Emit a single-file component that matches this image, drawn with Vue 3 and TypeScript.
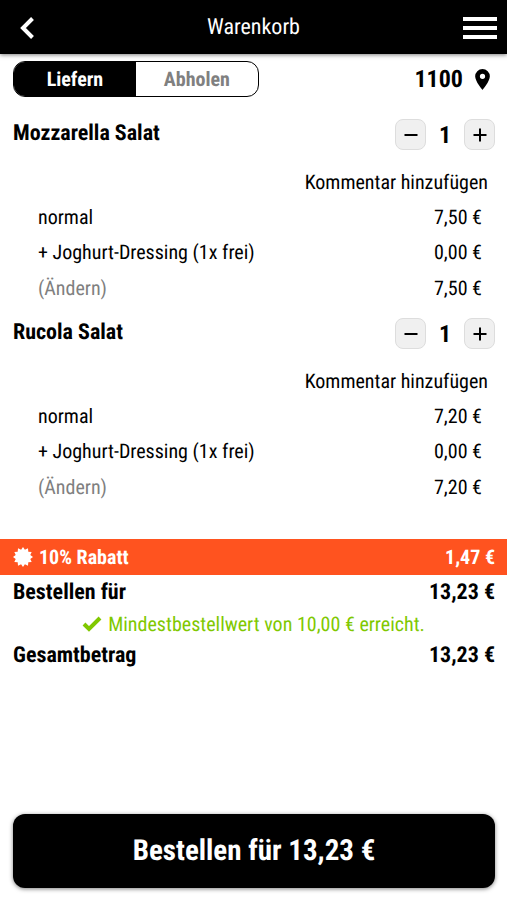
<script setup lang="ts">
import { computed, reactive, ref } from 'vue'

interface Item {
  name: string
  quantity: number
  price: number
}

const mode = ref<'deliver' | 'pickup'>('deliver')
const items = reactive<Item[]>([
  { name: 'Mozzarella Salat', quantity: 1, price: 7.5 },
  { name: 'Rucola Salat', quantity: 1, price: 7.2 },
])

const euro = (value: number): string => value.toFixed(2).replace('.', ',') + ' €'
const subtotal = computed(() => items.reduce((sum, item) => sum + item.price * item.quantity, 0))
const discount = computed(() => Math.round(subtotal.value * 10) / 100)
const total = computed(() => subtotal.value - discount.value)

function change(item: Item, step: number): void {
  item.quantity = Math.max(0, item.quantity + step)
}
</script>

<template>
  <div class="page">
    <header class="header">
      <button class="icon-button" type="button" aria-label="Zurück">
        <svg width="18" height="24" viewBox="0 0 18 24"><path d="M14.5 2.5 5 12l9.500 9.500" fill="none" stroke="#fff" stroke-width="4" /></svg>
      </button>
      <h1>Warenkorb</h1>
      <button class="icon-button" type="button" aria-label="Menü">
        <svg width="34" height="24" viewBox="0 0 34 24"><path d="M0 3h34M0 12h34M0 21h34" stroke="#fff" stroke-width="4" /></svg>
      </button>
    </header>

    <main class="content">
      <div class="options">
        <div class="toggle">
          <button type="button" :class="{ active: mode === 'deliver' }" @click="mode = 'deliver'">Liefern</button>
          <button type="button" :class="{ active: mode === 'pickup' }" @click="mode = 'pickup'">Abholen</button>
        </div>
        <button class="location" type="button">
          1100
          <svg width="15" height="21" viewBox="0 0 14 20"><path fill-rule="evenodd" d="M7 0a7 7 0 0 0-7 7c0 5 7 13 7 13s7-8 7-13a7 7 0 0 0-7-7Zm0 4.5a2.500 2.500 0 1 1 0 5 2.500 2.500 0 0 1 0-5Z" /></svg>
        </button>
      </div>

      <section v-for="item in items" :key="item.name" class="item">
        <div class="item-head">
          <h2>{{ item.name }}</h2>
          <div class="stepper">
            <button type="button" aria-label="Weniger" @click="change(item, -1)">
              <svg width="14" height="14" viewBox="0 0 14 14"><path d="M.5 7h13" stroke="#000" stroke-width="2" /></svg>
            </button>
            <span>{{ item.quantity }}</span>
            <button type="button" aria-label="Mehr" @click="change(item, 1)">
              <svg width="14" height="14" viewBox="0 0 14 14"><path d="M.5 7h13M7 .5v13" stroke="#000" stroke-width="2" /></svg>
            </button>
          </div>
        </div>
        <button class="comment" type="button">Kommentar hinzufügen</button>
        <div class="line"><span>normal</span><span>{{ euro(item.price) }}</span></div>
        <div class="line"><span>+ Joghurt-Dressing (1x frei)</span><span>{{ euro(0) }}</span></div>
        <div class="line"><button class="edit" type="button">(Ändern)</button><span>{{ euro(item.price * item.quantity) }}</span></div>
      </section>
    </main>

    <section class="summary">
      <div class="discount">
        <svg width="20" height="20" viewBox="-10 -10 20 20">
          <path d="M0-10 1.900-7.300 5-8.660 5.300-5.300 8.660-5 7.300-1.900 10 0 7.300 1.900 8.660 5 5.300 5.300 5 8.660 1.900 7.300 0 10-1.900 7.300-5 8.660-5.300 5.300-8.660 5-7.300 1.900-10 0-7.300-1.900-8.660-5-5.300-5.300-5-8.660-1.900-7.300Z" fill="#fff" />
        </svg>
        <span>10% Rabatt</span>
        <span class="amount">{{ euro(discount) }}</span>
      </div>
      <div class="sum"><span>Bestellen für</span><span>{{ euro(total) }}</span></div>
      <p class="minimum">
        <svg width="20" height="16" viewBox="0 0 20 16"><path d="m2 8 5 5L18 2" fill="none" stroke="#80c800" stroke-width="4" /></svg>
        Mindestbestellwert von 10,00 € erreicht.
      </p>
      <div class="sum"><span>Gesamtbetrag</span><span>{{ euro(total) }}</span></div>
    </section>

    <footer class="footer">
      <button class="order" type="button">Bestellen für {{ euro(total) }}</button>
    </footer>
  </div>
</template>

<style>
body {
  margin: 0;
  background: #fff;
}
</style>

<style scoped>
.page {
  display: flex;
  flex-direction: column;
  min-height: 100vh;
  box-sizing: border-box;
  color: #000;
  font-family: "Roboto Condensed", "Liberation Sans Narrow", Roboto, sans-serif;
  font-size: 20px;
  line-height: 24px;
  text-rendering: geometricPrecision;
}

button {
  padding: 0;
  border: 0;
  background: none;
  color: inherit;
  font: inherit;
  text-rendering: inherit;
  cursor: pointer;
}

svg {
  display: block;
  flex: none;
}

h1,
h2,
p {
  margin: 0;
}

.header {
  display: grid;
  grid-template-columns: 1fr auto 1fr;
  align-items: center;
  height: 54px;
  padding: 2px 10px 0 18px;
  box-sizing: border-box;
  background: #000;
  color: #fff;
  box-shadow: 0 1px 4px rgba(0, 0, 0, 0.5);
}

.header h1 {
  padding-right: 8px;
  font-size: 22px;
  font-weight: 400;
}

.icon-button {
  justify-self: start;
}

.icon-button:last-child {
  justify-self: end;
}

.content {
  padding: 7px 12px 0 13px;
}

.options {
  display: flex;
  align-items: center;
  justify-content: space-between;
}

.toggle {
  display: grid;
  grid-template-columns: 1fr 1fr;
  width: 51%;
  height: 36px;
  box-sizing: border-box;
  border: 1px solid #000;
  border-radius: 12px;
  overflow: hidden;
}

.toggle button {
  color: #808080;
  font-weight: 700;
}

.toggle .active {
  background: #000;
  color: #fff;
}

.location {
  display: flex;
  align-items: center;
  gap: 12px;
  padding-right: 5px;
  font-size: 24px;
  font-weight: 700;
}

.item {
  display: flex;
  flex-direction: column;
}

.item-head {
  display: flex;
  align-items: flex-start;
  justify-content: space-between;
  box-sizing: border-box;
  height: 67px;
  padding-top: 22px;
}

.item + .item .item-head {
  height: 57px;
  padding-top: 12px;
}

.item-head h2 {
  padding-top: 3px;
  font-size: 22px;
  font-weight: 700;
}

.stepper {
  display: grid;
  grid-template-columns: 31px 38px 31px;
  align-items: center;
  font-size: 24px;
  font-weight: 700;
  text-align: center;
}

.stepper button {
  display: grid;
  place-items: center;
  height: 31px;
  border: 1px solid #ddd;
  border-radius: 8px;
  background: #f0f0f0;
}

.comment {
  align-self: flex-end;
  height: 35px;
  padding-right: 7px;
}

.line {
  display: flex;
  align-items: center;
  justify-content: space-between;
  height: 35px;
  padding: 0 13px 0 25px;
}

.line:last-child {
  height: 37px;
}

.edit {
  color: #808080;
}

.summary {
  padding-top: 34px;
}

.discount {
  display: flex;
  align-items: center;
  gap: 6px;
  height: 36px;
  padding: 0 12px 0 13px;
  background: #ff531f;
  color: #fff;
  font-weight: 700;
}

.amount {
  margin-left: auto;
}

.sum {
  display: flex;
  align-items: center;
  justify-content: space-between;
  height: 35px;
  padding: 0 12px 0 13px;
  font-size: 22px;
  font-weight: 700;
}

.minimum {
  display: flex;
  align-items: center;
  justify-content: center;
  gap: 6px;
  height: 28px;
  color: #80c800;
}

.footer {
  margin-top: auto;
  padding: 12px 12px 12px 13px;
}

.order {
  width: 100%;
  height: 74px;
  border-radius: 12px;
  background: #000;
  color: #fff;
  font-size: 29px;
  font-weight: 700;
  box-shadow: 0 1px 4px rgba(0, 0, 0, 0.5);
}
</style>
